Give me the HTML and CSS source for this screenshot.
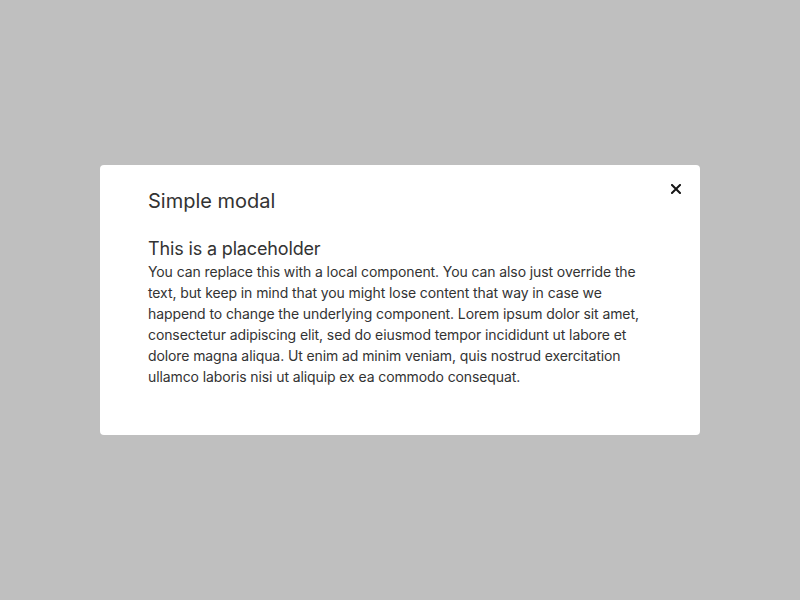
FILE: index.html
```html
<!DOCTYPE html>
<html>
<head>
<meta charset="utf-8">
<link rel="stylesheet" href="styles.css">
</head>
<body>
<div class="overlay">
  <div class="modal">
    <button class="close" aria-label="Close">
      <svg width="10" height="10" viewBox="0 0 10 10"><path d="M1 1L9 9M9 1L1 9" stroke="#161616" stroke-width="2" stroke-linecap="square"/></svg>
    </button>
    <h2 class="title">Simple modal</h2>
    <h3 class="subtitle">This is a placeholder</h3>
    <p class="text">You can replace this with a local component. You can also just override the text, but keep in mind that you might lose content that way in case we happend to change the underlying component. Lorem ipsum dolor sit amet, consectetur adipiscing elit, sed do eiusmod tempor incididunt ut labore et dolore magna aliqua. Ut enim ad minim veniam, quis nostrud exercitation ullamco laboris nisi ut aliquip ex ea commodo consequat.</p>
  </div>
</div>
</body>
</html>
```

FILE: styles.css
```css
html, body {
  margin: 0;
  padding: 0;
  height: 100%;
}
body {
  background: #bfbfbf;
  font-family: Inter, "Noto Sans", sans-serif;
  color: #333333;
}
.overlay {
  height: 100%;
  display: flex;
  align-items: center;
  justify-content: center;
}
.modal {
  position: relative;
  width: 600px;
  box-sizing: border-box;
  background: #ffffff;
  border-radius: 4px;
  padding: 24px 48px 48px;
}
.close {
  position: absolute;
  top: 19px;
  right: 19px;
  width: 10px;
  height: 10px;
  padding: 0;
  border: 0;
  background: none;
  display: flex;
}
.title {
  margin: 0 0 24px;
  font-size: 20px;
  line-height: 24px;
  font-weight: 400;
}
.subtitle {
  margin: 0;
  font-size: 18px;
  line-height: 24px;
  font-weight: 400;
  letter-spacing: -0.15px;
}
.text {
  margin: 0;
  font-size: 14px;
  line-height: 21px;
  letter-spacing: -0.1px;
}
```
